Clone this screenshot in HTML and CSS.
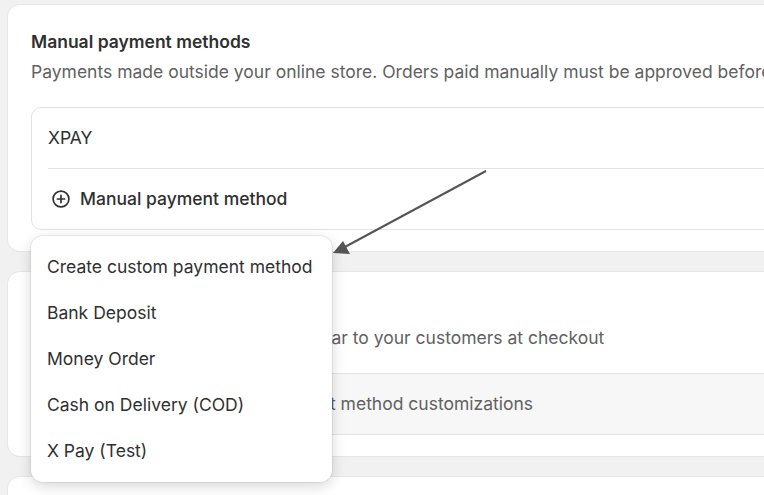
FILE: index.html
```html
<!DOCTYPE html>
<html lang="en">
<head>
<meta charset="utf-8">
<title>Payments</title>
<link rel="stylesheet" href="styles.css">
</head>
<body>
<div class="page">
  <section class="card card-manual">
    <h2 class="card-title">Manual payment methods</h2>
    <p class="card-desc">Payments made outside your online store. Orders paid manually must be approved before being fulfilled.</p>
    <div class="box">
      <div class="box-row">XPAY</div>
      <div class="box-divider"></div>
      <div class="box-row add-row">
        <svg class="plus-icon" viewBox="0 0 20 20" width="20" height="20" aria-hidden="true">
          <circle cx="10" cy="10" r="7.9" fill="none" stroke="#303030" stroke-width="1.7"/>
          <path d="M10 6.4v7.2M6.4 10h7.2" stroke="#303030" stroke-width="1.7" stroke-linecap="round"/>
        </svg>
        <span>Manual payment method</span>
      </div>
    </div>
  </section>

  <section class="card card-custom">
    <h2 class="card-title">Payment customizations</h2>
    <p class="card-desc">Control how payment methods appear to your customers at checkout</p>
    <div class="box box-muted">
      <div class="box-row muted-text">Use apps to manage your payment method customizations</div>
    </div>
  </section>

  <section class="card card-next"></section>

  <div class="popover" role="menu">
    <div class="menu-item">Create custom payment method</div>
    <div class="menu-item">Bank Deposit</div>
    <div class="menu-item">Money Order</div>
    <div class="menu-item">Cash on Delivery (COD)</div>
    <div class="menu-item">X Pay (Test)</div>
  </div>

  <svg class="annotation" width="764" height="495" viewBox="0 0 764 495" aria-hidden="true">
    <line x1="486" y1="171" x2="343" y2="248" stroke="#555" stroke-width="2"/>
    <polygon points="333,253 343,241 350,254" fill="#555"/>
  </svg>
</div>
</body>
</html>
```

FILE: styles.css
```css
* { box-sizing: border-box; }

html, body {
  margin: 0;
  padding: 0;
  background: #f1f1f1;
  overflow: hidden;
  width: 764px;
  height: 495px;
}

body {
  font-family: Inter, "Noto Sans", "Liberation Sans", sans-serif;
  font-size: 17.5px;
  line-height: 24px;
  color: #303030;
}

.page {
  position: relative;
  padding: 5px 0 0 8px;
  display: flex;
  flex-direction: column;
  gap: 21px;
  width: 764px;
  height: 495px;
  overflow: hidden;
}

.card {
  width: 820px;
  background: #fff;
  border-radius: 12px;
  box-shadow: 0 0 0 1px #e6e6e6, 0 1px 0 0 #dcdcdc;
  padding: 25px 23px 21px;
  flex-shrink: 0;
}

.card-title {
  margin: 0;
  font-size: 17.5px;
  line-height: 24px;
  font-weight: 600;
  color: #303030;
}

.card-desc {
  margin: 6px 0 0;
  color: #616161;
  white-space: nowrap;
  overflow: hidden;
}

.box {
  margin-top: 23px;
  border: 1px solid #e3e3e3;
  border-radius: 10px;
}

.box-row {
  padding: 18px 16px;
  white-space: nowrap;
}

.box-divider {
  height: 1px;
  margin: 0 0 0 16px;
  background: #e3e3e3;
}

.add-row {
  display: flex;
  align-items: center;
  gap: 9px;
  padding-left: 19px;
  font-weight: 500;
}

.plus-icon { flex-shrink: 0; }

.card-custom {
  padding-top: 24px;
}

.card-custom .box { margin-top: 23px; }

.box-muted {
  background: #f7f7f7;
  border-radius: 0;
  border-left: none;
}

.muted-text { color: #616161; }

.card-next {
  height: 60px;
}

.popover {
  position: absolute;
  left: 31px;
  top: 236px;
  width: 301px;
  padding: 8px 0;
  background: #fff;
  border-radius: 12px;
  box-shadow: 0 0 0 1px rgba(0, 0, 0, 0.06), 0 4px 14px rgba(0, 0, 0, 0.16);
}

.menu-item {
  height: 46px;
  display: flex;
  align-items: center;
  padding-left: 16px;
  color: #303030;
  white-space: nowrap;
}

.annotation {
  position: absolute;
  left: 0;
  top: 0;
  pointer-events: none;
}
```
